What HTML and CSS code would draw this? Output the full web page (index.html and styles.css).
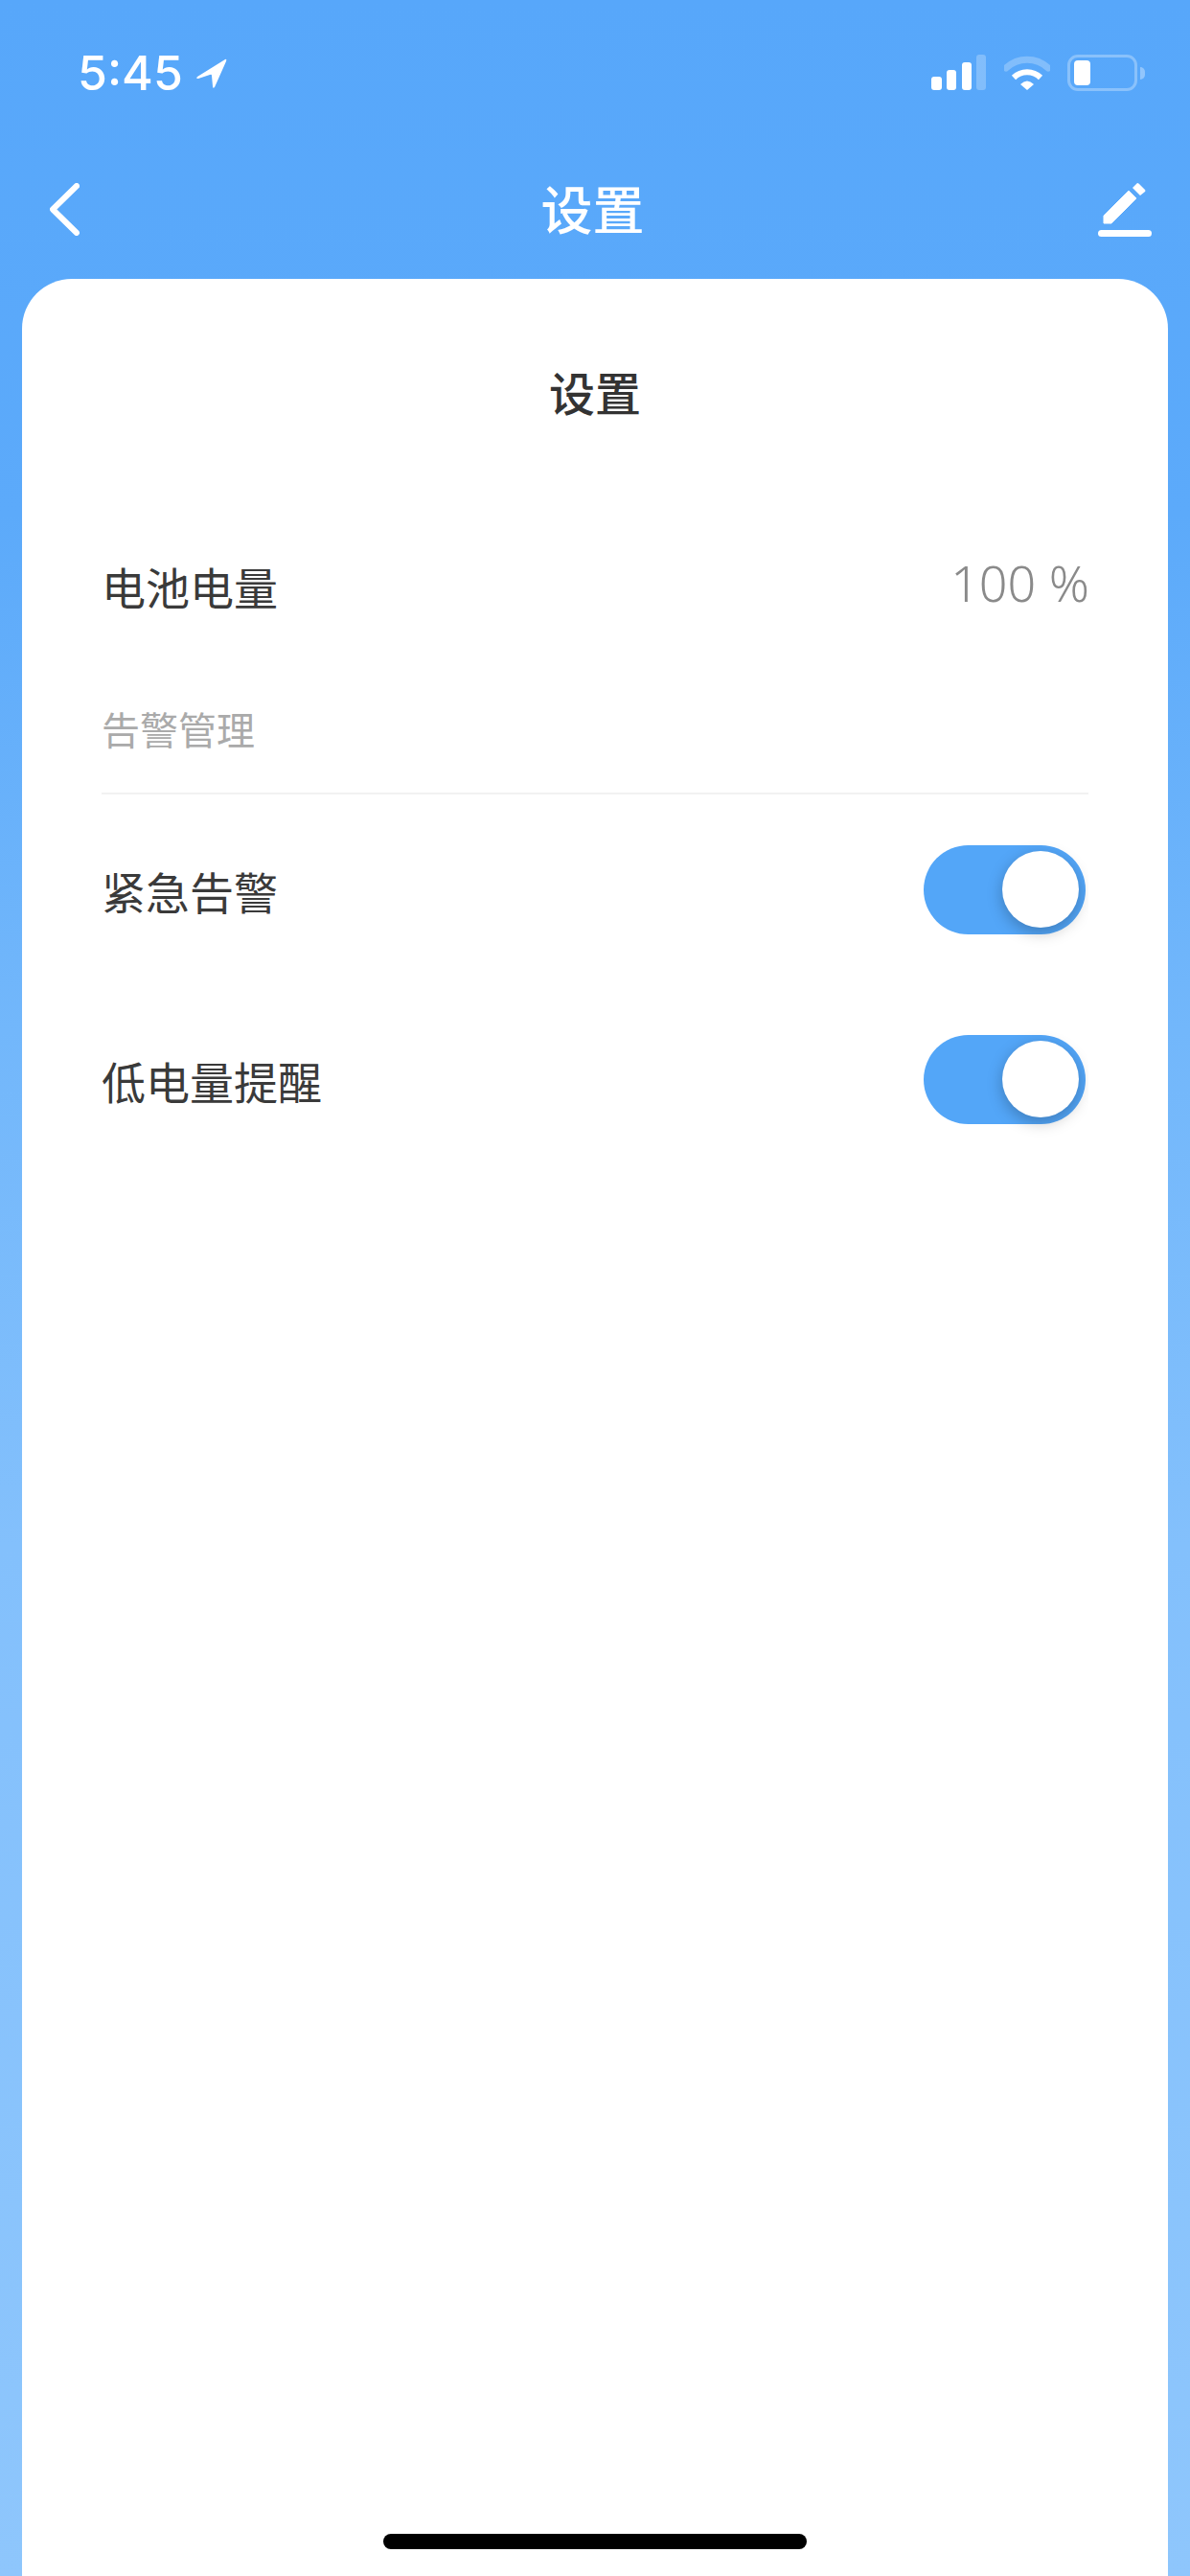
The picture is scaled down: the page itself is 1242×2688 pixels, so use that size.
FILE: index.html
```html
<!DOCTYPE html>
<html lang="zh-CN">
<head>
    <meta charset="UTF-8">
    <title>设置</title>
    <link rel="stylesheet" href="styles.css">
</head>
<body>

    <div class="status-bar">
        <div class="status-left">
            <span class="time">5:45</span>
            <svg class="arrow" width="33" height="33" viewBox="0 0 33 33">
                <path d="M2 20 L31 2 Q33 1 32 4 L20 31 Q18 33 18 30 L17 19 Q17 17 15 18 L3 22 Q0 22 2 20 Z" fill="#fff"/>
            </svg>
        </div>
        <div class="status-right">
            <svg class="signal" width="58" height="37" viewBox="0 0 58 37">
                <rect x="0" y="23" width="11" height="14" rx="3" fill="#fff"/>
                <rect x="16" y="16" width="10" height="21" rx="3" fill="#fff"/>
                <rect x="32" y="8" width="10" height="29" rx="3" fill="#fff"/>
                <rect x="47" y="0" width="10" height="37" rx="3" fill="#fff" opacity="0.25"/>
            </svg>
            <svg class="wifi" width="48" height="37" viewBox="0 0 48 37">
                <path d="M2 14 A32 32 0 0 1 46 14" fill="none" stroke="#fff" stroke-width="7" stroke-linecap="round" opacity="0.25"/>
                <path d="M10 24 A20 20 0 0 1 38 24" fill="none" stroke="#fff" stroke-width="6" stroke-linecap="butt"/>
                <path d="M17 31 Q24 24 31 31 L24 37 Z" fill="#fff"/>
            </svg>
            <div class="battery">
                <div class="battery-body"><div class="battery-level"></div></div>
                <div class="battery-tip"></div>
            </div>
        </div>
    </div>

    <div class="nav-bar">
        <svg class="back" width="31" height="55" viewBox="0 0 31 55">
            <path d="M28 3 L3 27.5 L28 52" fill="none" stroke="#fff" stroke-width="6" stroke-linecap="round" stroke-linejoin="round"/>
        </svg>
        <div class="nav-title">设置</div>
        <svg class="edit" width="56" height="56" viewBox="0 0 56 56">
            <path d="M6 42 L6 34 L32 8 L40 16 L14 42 Z" fill="#fff" stroke="#fff" stroke-width="1" stroke-linejoin="round"/>
            <path d="M36 5 L41 0 Q42 0 43 1 L49 7 Q50 8 49 9 L44 13 Z" fill="#fff"/>
            <rect x="0" y="49" width="56" height="7" rx="3.5" fill="#fff"/>
        </svg>
    </div>

    <div class="card">
        <h2 class="card-title">设置</h2>

        <div class="row row-battery">
            <span class="row-label">电池电量</span>
            <span class="row-value">100 %</span>
        </div>

        <div class="section-title">告警管理</div>

        <div class="row row-switch">
            <span class="row-label">紧急告警</span>
            <div class="switch"><div class="knob"></div></div>
        </div>
        <div class="row row-switch">
            <span class="row-label">低电量提醒</span>
            <div class="switch"><div class="knob"></div></div>
        </div>

        <div class="home-bar"></div>
    </div>

</body>
</html>
```

FILE: styles.css
```css
* {
    box-sizing: border-box;
}
html, body {
    height: 100%;
}
body {
    margin: 0;
    height: 2688px;
    overflow: hidden;
    display: flex;
    flex-direction: column;
    font-family: "Noto Sans", "Noto Sans CJK SC", sans-serif;
    background: linear-gradient(180deg, #57a7fa 0%, #5caafa 20%, #72b7fb 40%, #83c0fc 60%, #8ec6fc 100%);
}
.status-bar {
    height: 180px;
    flex: none;
    display: flex;
    justify-content: space-between;
    align-items: flex-start;
    padding: 57px 47px 0 81px;
}
.status-left {
    display: flex;
    align-items: center;
    gap: 13px;
    height: 38px;
}
.time {
    font-family: Inter, sans-serif;
    font-size: 50px;
    line-height: 38px;
    font-weight: 500;
    color: #fff;
}
.status-right {
    display: flex;
    align-items: flex-start;
    gap: 18px;
}
.battery {
    display: flex;
    align-items: center;
    gap: 3px;
}
.battery-body {
    width: 73px;
    height: 38px;
    padding: 3px 4px;
    border: 3px solid rgba(255,255,255,0.3);
    border-radius: 11px;
}
.battery-level {
    width: 17px;
    height: 100%;
    background: #fff;
    border-radius: 4px;
}
.battery-tip {
    width: 5px;
    height: 13px;
    background: rgba(255,255,255,0.35);
    border-radius: 0 6px 6px 0;
}
.nav-bar {
    height: 111px;
    flex: none;
    display: flex;
    justify-content: space-between;
    align-items: flex-start;
    padding: 11px 40px 0 52px;
}
.nav-title {
    font-size: 54px;
    line-height: 70px;
    font-weight: 500;
    color: #fff;
    margin-left: 8px;
    margin-top: -7px;
}
.card {
    flex: 1;
    margin: 0 23px;
    padding: 0 83px 0 83px;
    background: #fff;
    border-radius: 52px 52px 0 0;
    display: flex;
    flex-direction: column;
}
.card-title {
    margin: 90px 0 0;
    text-align: center;
    font-size: 48px;
    line-height: 60px;
    font-weight: 500;
    color: #333;
}
.row {
    display: flex;
    justify-content: space-between;
    align-items: center;
}
.row-label {
    font-size: 46px;
    line-height: 60px;
    color: #3a3a3a;
    font-family: "Noto Sans CJK SC", sans-serif;
}
.row-battery {
    margin-top: 140px;
    height: 60px;
}
.row-value {
    font-size: 52px;
    line-height: 60px;
    color: #8a8a8a;
    font-weight: 300;
    margin-right: -1px;
    margin-top: -6px;
}
.section-title {
    margin-top: 96px;
    padding-bottom: 42px;
    height: 92px;
    font-size: 40px;
    line-height: 50px;
    color: #aaa;
    border-bottom: 2px solid #f2f2f2;
}
.row-switch {
    height: 93px;
    margin-bottom: 105px;
}
.row-battery + .section-title + .row-switch {
    margin-top: 53px;
}
.switch {
    width: 169px;
    height: 93px;
    margin-right: 3px;
    padding: 6px 7px;
    display: flex;
    justify-content: flex-end;
    background: #53a6f8;
    border-radius: 47px;
    clip-path: inset(-6px -3px -30px -6px);
}
.knob {
    width: 80px;
    height: 80px;
    background: #fff;
    border-radius: 50%;
    box-shadow: 0 5px 16px rgba(0,0,0,0.25);
}
.home-bar {
    margin-top: auto;
    margin-bottom: 28px;
    align-self: center;
    width: 442px;
    height: 16px;
    background: #000;
    border-radius: 8px;
}
```
